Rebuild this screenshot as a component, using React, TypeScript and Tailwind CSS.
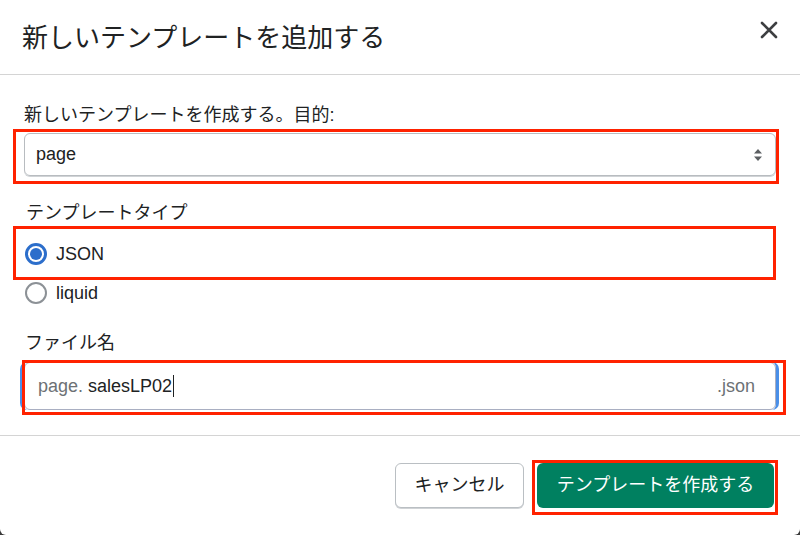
import React from "react";

const font = "font-['Liberation_Sans','Noto_Sans_CJK_JP',sans-serif]";

// red annotation frame drawn over a field
const Mark = ({ className }: { className: string }) => (
    <div className={`pointer-events-none absolute border-[3px] border-[#ff2200] ${className}`} />
);

export default function App() {
    return (
        <div className={`w-[800px] h-[535px] bg-[#3a3a3a] ${font}`}>
            <div className="w-full h-full bg-white rounded-b-[6px] flex flex-col text-[#202223]">
                <header className="h-[75px] shrink-0 flex items-center justify-between pl-[22px] pr-[24px] border-b border-[#d4d4d4]">
                    <h1 className="text-[26px] leading-none pt-[1px]">新しいテンプレートを追加する</h1>
                    <svg width="18" height="18" viewBox="0 0 18 18" className="mr-[-2px] mt-[-14px]">
                        <path d="M2 2 L16 16 M16 2 L2 16" stroke="#3d3f41" strokeWidth="2.6" strokeLinecap="round" />
                    </svg>
                </header>

                <main className="flex-1 px-[24px] pt-[28px] border-b border-[#d4d4d4]">
                    <label className="block text-[18px] leading-[24px]">新しいテンプレートを作成する。目的:</label>
                    <div className="relative mt-[6px]">
                        <div className="h-[43px] flex items-center justify-between pl-[11px] pr-[12px] border border-[#b8bcc0] rounded-[6px] shadow-[0_1px_0_#d0d3d6] text-[18px]">
                            <span>page</span>
                            <svg width="10" height="16" viewBox="0 0 10 16">
                                <path d="M1 6.5 L5 2 L9 6.5 Z M1 9.5 L5 14 L9 9.5 Z" fill="#5c5f62" />
                            </svg>
                        </div>
                        <Mark className="-left-[11px] -right-[3px] -top-[4px] -bottom-[8px]" />
                    </div>

                    <label className="block mt-[25px] text-[18px] leading-[24px] pl-[2px]">テンプレートタイプ</label>
                    <div className="relative mt-[9px] h-[40px] flex items-center gap-[9px] pl-[1px]">
                        <span className="w-[22px] h-[22px] rounded-full border-[3px] border-[#2c6ecb] flex items-center justify-center">
                            <span className="w-[12px] h-[12px] rounded-full bg-[#2c6ecb]" />
                        </span>
                        <span className="text-[18px]">JSON</span>
                        <Mark className="-left-[11px] right-0 -top-[8px] -bottom-[6px]" />
                    </div>
                    <div className="h-[38px] flex items-center gap-[9px] pl-[1px]">
                        <span className="w-[22px] h-[22px] rounded-full border-2 border-[#8c9196]" />
                        <span className="text-[18px]">liquid</span>
                    </div>

                    <label className="block mt-[19px] text-[18px] leading-[24px] pl-[1px]">ファイル名</label>
                    <div className="relative mt-[7px]">
                        <div className="-ml-[4px] -mr-[3px] rounded-[7px] border-l-[4px] border-r-[3px] border-[#4a8fe8]">
                            <div className="h-[48px] flex items-center justify-between pl-[13px] pr-[20px] border border-[#a9afc2] rounded-[6px] text-[18px] bg-white">
                                <span className="flex items-center">
                                    <span className="text-[#6d7175]">page.</span>
                                    <span className="ml-[5px]">salesLP02</span>
                                    <span className="ml-[1px] w-[1px] h-[22px] bg-[#202223]" />
                                </span>
                                <span className="text-[#6d7175]">.json</span>
                            </div>
                        </div>
                        <Mark className="-left-[2px] -right-[10px] -top-[2px] -bottom-[5px]" />
                    </div>
                </main>

                <footer className="h-[99px] shrink-0 flex items-start justify-end gap-[13px] pt-[27px] pr-[26px]">
                    <button className="w-[129px] h-[45px] rounded-[6px] border border-[#babfc3] shadow-[0_1px_0_#d0d3d6] bg-white text-[18px] text-[#202223]">
                        キャンセル
                    </button>
                    <div className="relative">
                        <button className="w-[237px] h-[45px] rounded-[6px] bg-[#008060] text-[18px] text-white">
                            テンプレートを作成する
                        </button>
                        <Mark className="-left-[5px] -right-[4px] -top-[3px] -bottom-[7px]" />
                    </div>
                </footer>
            </div>
        </div>
    );
}
